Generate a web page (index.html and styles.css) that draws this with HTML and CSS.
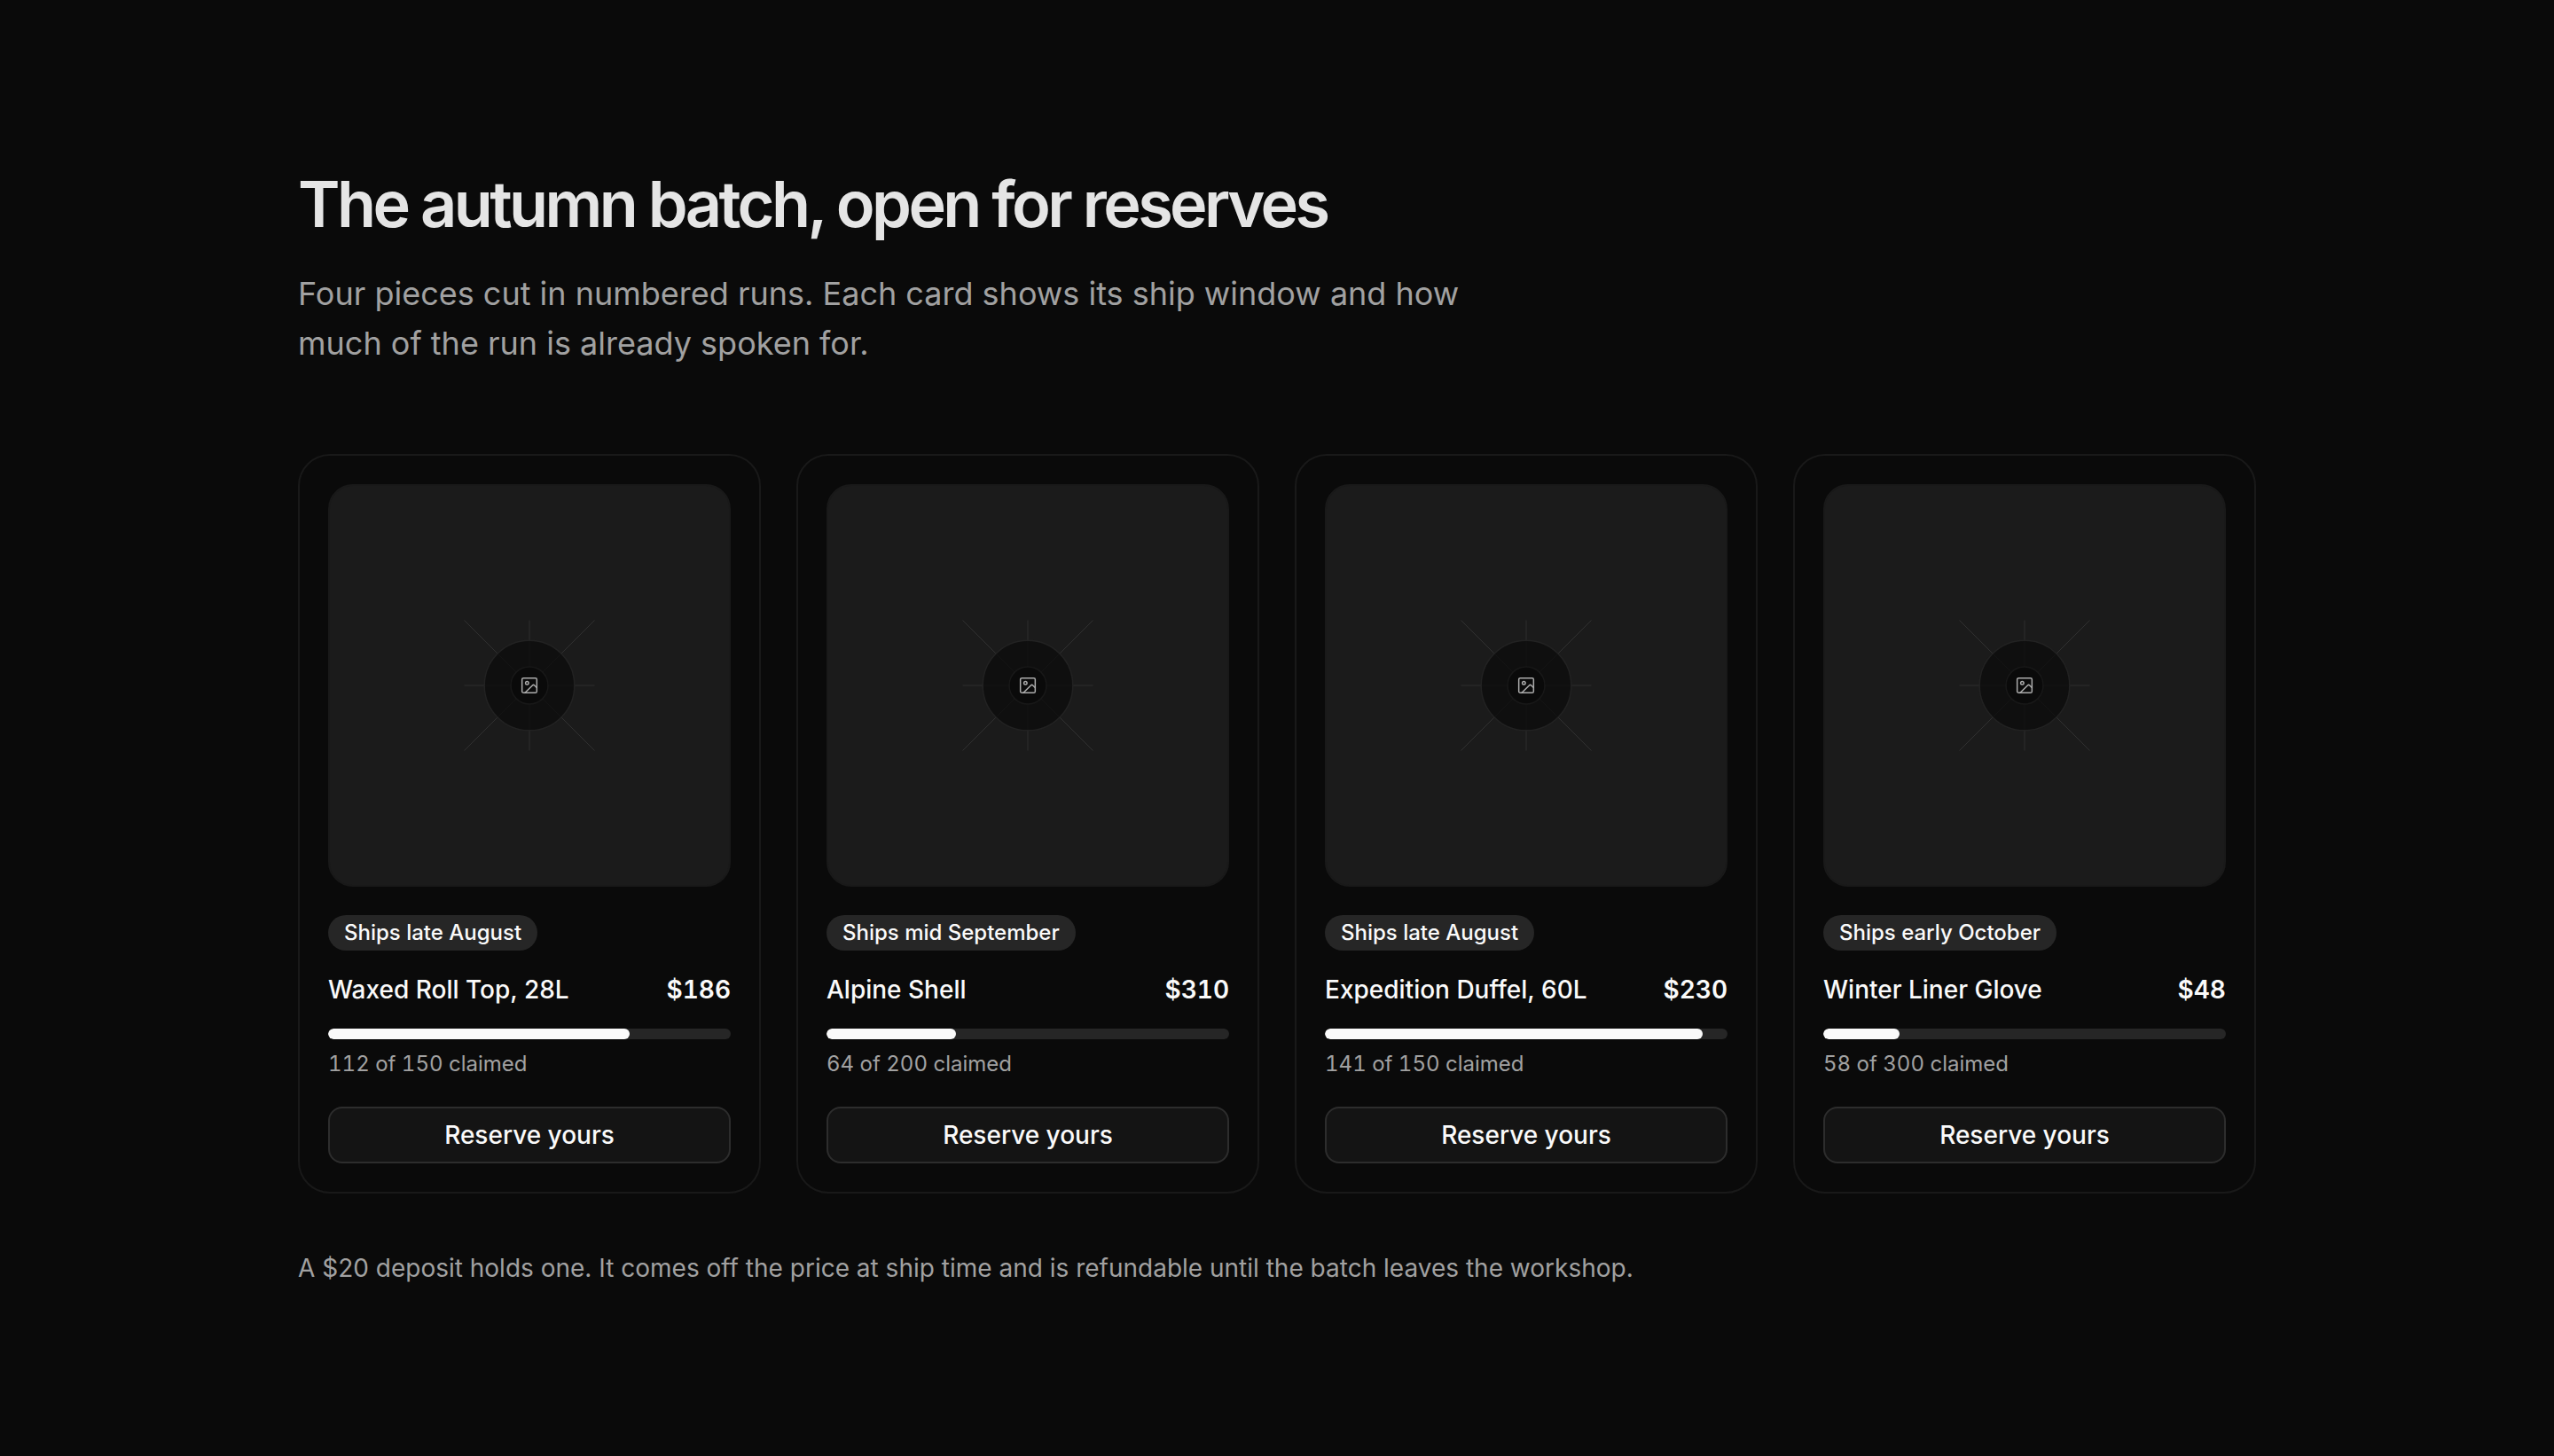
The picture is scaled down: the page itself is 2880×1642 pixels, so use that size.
FILE: index.html
```html
<!DOCTYPE html>
<html lang="en">
<head>
<meta charset="utf-8">
<title>The autumn batch</title>
<link rel="stylesheet" href="styles.css">
</head>
<body>
<svg class="defs" width="0" height="0" aria-hidden="true">
  <symbol id="placeholder" viewBox="0 0 148 148">
    <g class="rays">
      <path class="axis" d="M74 0.5V147.5M0.5 74H147.5"/>
      <path class="diagonal" d="M0.5 0.5L147.5 147.5M147.5 0.5L0.5 147.5"/>
    </g>
    <circle class="ring" cx="74" cy="74" r="50.8"/>
    <circle class="hub" cx="74" cy="74" r="21"/>
    <g class="glyph" transform="translate(64 64) scale(0.8333)">
      <rect x="2" y="2" width="20" height="20" rx="2"/>
      <circle cx="8.8" cy="8.8" r="2.1"/>
      <path d="m22 15-3.086-3.086a2 2 0 0 0-2.828 0L6 22"/>
    </g>
  </symbol>
</svg>
<main class="section">
  <header class="intro">
    <h1 class="heading">The autumn batch, open for reserves</h1>
    <p class="lead">Four pieces cut in numbered runs. Each card shows its ship window and how much of the run is already spoken for.</p>
  </header>
  <div class="grid">
    <article class="card">
      <div class="media"><svg class="art"><use href="#placeholder"/></svg></div>
      <span class="badge">Ships late August</span>
      <div class="row"><h2 class="name">Waxed Roll Top, 28L</h2><span class="price">$186</span></div>
      <div class="track"><div class="fill" style="width:74.9%"></div></div>
      <p class="claimed">112 of 150 claimed</p>
      <button class="button">Reserve yours</button>
    </article>
    <article class="card">
      <div class="media"><svg class="art"><use href="#placeholder"/></svg></div>
      <span class="badge">Ships mid September</span>
      <div class="row"><h2 class="name">Alpine Shell</h2><span class="price">$310</span></div>
      <div class="track"><div class="fill" style="width:32.16%"></div></div>
      <p class="claimed">64 of 200 claimed</p>
      <button class="button">Reserve yours</button>
    </article>
    <article class="card">
      <div class="media"><svg class="art"><use href="#placeholder"/></svg></div>
      <span class="badge">Ships late August</span>
      <div class="row"><h2 class="name">Expedition Duffel, 60L</h2><span class="price">$230</span></div>
      <div class="track"><div class="fill" style="width:93.83%"></div></div>
      <p class="claimed">141 of 150 claimed</p>
      <button class="button">Reserve yours</button>
    </article>
    <article class="card">
      <div class="media"><svg class="art"><use href="#placeholder"/></svg></div>
      <span class="badge">Ships early October</span>
      <div class="row"><h2 class="name">Winter Liner Glove</h2><span class="price">$48</span></div>
      <div class="track"><div class="fill" style="width:18.95%"></div></div>
      <p class="claimed">58 of 300 claimed</p>
      <button class="button">Reserve yours</button>
    </article>
  </div>
  <p class="note">A $20 deposit holds one. It comes off the price at ship time and is refundable until the batch leaves the workshop.</p>
</main>
</body>
</html>
```
FILE: styles.css
```css
* { box-sizing: border-box; margin: 0; }
body {
  background: #0a0a0a;
  color: #fafafa;
  font-family: Inter, "Liberation Sans", sans-serif;
  font-size: 28px;
  line-height: 40px;
}
.defs { position: absolute; }
.section { width: 2208px; margin: 0 auto; padding: 192px 0; }
.heading {
  height: 80px;
  font-size: 72px;
  line-height: 76px;
  font-weight: 600;
  letter-spacing: -3.6px;
  color: #e5e5e5;
}
.lead {
  width: 1344px;
  margin-top: 31px;
  font-size: 36px;
  line-height: 56px;
  color: #a1a1a1;
}
.grid {
  display: grid;
  grid-template-columns: repeat(4, 1fr);
  gap: 40px;
  margin-top: 97px;
}
.card {
  display: flex;
  flex-direction: column;
  align-items: stretch;
  padding: 32px;
  border: 2px solid #191919;
  border-radius: 36px;
}
.media {
  display: grid;
  place-items: center;
  aspect-ratio: 1;
  border: 2px solid #191919;
  border-radius: 28px;
  background: #1b1b1b;
}
.art { width: 148px; height: 148px; }
.rays { fill: none; stroke: #242424; stroke-width: 2; }
.diagonal { stroke: #303030; stroke-width: 1; }
.ring { fill: #0d0d0dc8; stroke: #222222; stroke-width: 1.5; }
.hub { fill: #0a0a0a; stroke: #181818; stroke-width: 1.5; }
.glyph {
  fill: none;
  stroke: #acacac;
  stroke-width: 1.8;
  stroke-linecap: round;
  stroke-linejoin: round;
}
.badge {
  align-self: flex-start;
  margin-top: 32px;
  height: 40px;
  padding: 0 18px;
  border-radius: 20px;
  background: #262626;
  font-size: 24px;
  font-weight: 500;
  white-space: nowrap;
}
.row {
  display: flex;
  justify-content: space-between;
  margin: 24px 0;
}
.name { font-size: 28px; line-height: 40px; font-weight: 500; }
.price { font-weight: 600; font-variant-numeric: tabular-nums; }
.track {
  height: 12px;
  border-radius: 6px;
  background: #262626;
  overflow: hidden;
}
.fill { height: 100%; border-radius: 6px; background: #fafafa; }
.claimed {
  margin: 12px 0 32px;
  font-size: 24px;
  line-height: 32px;
  font-variant-numeric: tabular-nums;
  color: #a1a1a1;
}
.button {
  height: 64px;
  padding: 0;
  border: 2px solid #2d2d2d;
  border-radius: 16px;
  background: #141414;
  color: #fafafa;
  font: 500 28px/40px Inter, "Liberation Sans", sans-serif;
}
.note { margin-top: 64px; color: #a1a1a1; }
```
